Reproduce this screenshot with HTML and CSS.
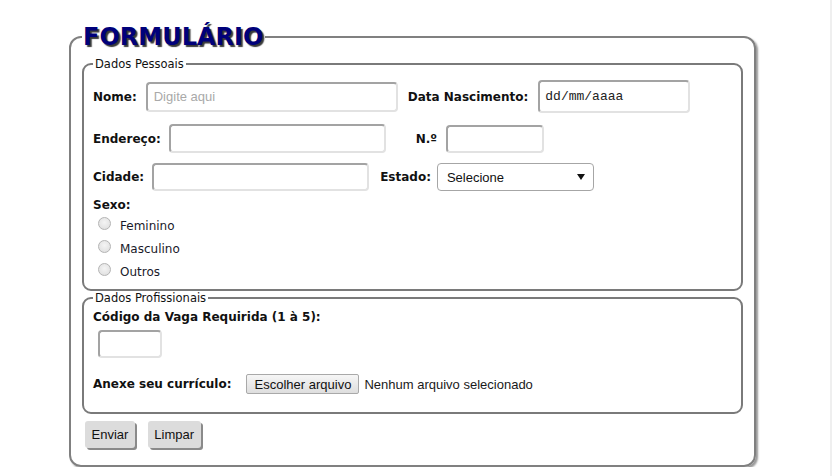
FILE: index.html
```html
<!DOCTYPE html>
<html lang="pt-BR">
<head>
<meta charset="utf-8">
<title>Formulário</title>
<link rel="stylesheet" href="styles.css">
</head>
<body>
<div class="page">
  <form class="form">
    <fieldset class="outer">
      <legend class="title">FORMULÁRIO</legend>

      <fieldset class="group personal">
        <legend class="group-title">Dados Pessoais</legend>

        <div class="row row1">
          <label class="lbl">Nome:</label>
          <input class="field f-nome" type="text" placeholder="Digite aqui">
          <label class="lbl l-data">Data Nascimento:</label>
          <input class="field f-data" type="text" value="dd/mm/aaaa">
        </div>

        <div class="row row2">
          <label class="lbl">Endereço:</label>
          <input class="field f-end" type="text">
          <label class="lbl l-num">N.º</label>
          <input class="field f-num" type="text">
        </div>

        <div class="row row3">
          <label class="lbl">Cidade:</label>
          <input class="field f-cid" type="text">
          <label class="lbl l-est">Estado:</label>
          <span class="select-wrap">
            <select class="select"><option>Selecione</option></select>
            <svg class="arrow" width="8" height="6" viewBox="0 0 8 6"><path d="M0 0H8L4 6Z" fill="#111"/></svg>
          </span>
        </div>

        <div class="lbl sexo">Sexo:</div>
        <div class="radios">
          <label class="radio-row"><input class="radio" type="radio" name="sexo"><span>Feminino</span></label>
          <label class="radio-row"><input class="radio" type="radio" name="sexo"><span>Masculino</span></label>
          <label class="radio-row"><input class="radio" type="radio" name="sexo"><span>Outros</span></label>
        </div>
      </fieldset>

      <fieldset class="group prof">
        <legend class="group-title">Dados Profissionais</legend>
        <div class="lbl codigo">Código da Vaga Requirida (1 à 5):</div>
        <input class="field f-cod" type="text">
        <div class="row file-row">
          <label class="lbl">Anexe seu currículo:</label>
          <button type="button" class="file-btn">Escolher arquivo</button>
          <span class="file-name">Nenhum arquivo selecionado</span>
        </div>
      </fieldset>

      <div class="actions">
        <button type="submit" class="btn">Enviar</button>
        <button type="reset" class="btn">Limpar</button>
      </div>
    </fieldset>
  </form>
</div>
</body>
</html>
```

FILE: styles.css
```css
html {
  background: linear-gradient(to left, #efefef 2px, #ffffff 2px);
  min-height: 100%;
}
body {
  margin: 0;
  font-family: "DejaVu Sans", Verdana, sans-serif;
  color: #111;
}
.page {
  padding-top: 23px;
}
.form {
  margin: 0;
}
.outer {
  margin: 0 0 0 69px;
  width: 687px;
  box-sizing: border-box;
  border: 2px solid #808080;
  border-radius: 12px;
  box-shadow: 2px 2px 2px #9a9a9a;
  padding: 6px 11px 17px 11px;
  min-width: 0;
}
.title {
  font-family: "DejaVu Sans", Verdana, sans-serif;
  font-weight: bold;
  font-size: 24px;
  line-height: 28px;
  color: #00007a;
  text-shadow: 2px 2px 1px #3a3a3a;
  padding: 0 2px 0 1px;
}
.group {
  margin: 0;
  border: 2px solid #7a7a7a;
  border-radius: 9px;
  padding: 9px 9px 6px 9px;
  min-width: 0;
}
.group-title {
  font-size: 11.5px;
  line-height: 14px;
  padding: 0 2px;
  color: #111;
}
.row {
  display: flex;
  align-items: center;
}
.lbl {
  font-weight: bold;
  font-size: 12px;
  line-height: 14px;
  color: #111;
  white-space: nowrap;
}
.field {
  box-sizing: border-box;
  border: 2px solid;
  border-color: #a3a3a3 #e2e2e2 #e2e2e2 #a3a3a3;
  border-radius: 4px;
  background: #fff;
  font-family: "Liberation Sans", Arial, sans-serif;
  font-size: 13px;
  padding: 0 6px;
  margin: 0;
  outline: none;
}
.field::placeholder {
  color: #a9a9a9;
}
.row1 { height: 33px; }
.f-nome { margin-left: 9px; width: 252px; height: 30px; }
.l-data { margin-left: 10px; }
.f-data {
  margin-left: 10px;
  width: 152px;
  height: 33px;
  padding: 0 5px;
  font-family: "Liberation Mono", "Courier New", monospace;
  font-size: 13px;
  color: #222;
}
.row2 { height: 29px; margin-top: 11px; }
.f-end { margin-left: 8px; width: 217px; height: 29px; }
.l-num { margin-left: 30px; }
.f-num { margin-left: 9px; width: 98px; height: 28px; }
.row3 { height: 28px; margin-top: 10px; }
.f-cid { margin-left: 8px; width: 217px; height: 28px; }
.l-est { margin-left: 11px; }
.select-wrap {
  position: relative;
  margin-left: 6px;
  display: block;
  width: 157px;
  height: 28px;
}
.select {
  appearance: none;
  -webkit-appearance: none;
  box-sizing: border-box;
  width: 157px;
  height: 28px;
  border: 1px solid #a6a6a6;
  border-radius: 4px;
  background: #fff;
  font-family: "Liberation Sans", Arial, sans-serif;
  font-size: 13px;
  color: #111;
  padding: 0 9px;
  margin: 0;
}
.arrow {
  position: absolute;
  right: 9px;
  top: 11px;
}
.sexo {
  margin-top: 7px;
}
.radios {
  display: flex;
  flex-direction: column;
  padding-top: 2px;
}
.radio-row {
  display: flex;
  align-items: center;
  height: 23px;
  font-size: 12px;
  color: #1a1a2a;
}
.radio {
  appearance: none;
  -webkit-appearance: none;
  box-sizing: border-box;
  width: 13px;
  height: 13px;
  margin: -5px 9px 0 5px;
  border: 1px solid #b4b4b4;
  border-radius: 50%;
  background: radial-gradient(circle at 50% 40%, #f4f4f4 0%, #dcdcdc 100%);
}
.prof {
  padding-top: 5px;
  padding-bottom: 18px;
}
.f-cod {
  display: block;
  margin: 6px 0 0 5px;
  width: 64px;
  height: 28px;
}
.file-row {
  margin-top: 16px;
  height: 20px;
}
.file-btn {
  margin: 0 0 0 15px;
  box-sizing: border-box;
  height: 20px;
  width: 113px;
  padding: 0;
  border: 1px solid #a9a9a9;
  border-radius: 2px;
  background: linear-gradient(#f6f6f6, #dedede);
  font-family: "Liberation Sans", Arial, sans-serif;
  font-size: 13px;
  color: #111;
}
.file-name {
  margin-left: 5px;
  font-family: "Liberation Sans", Arial, sans-serif;
  font-size: 13px;
  color: #1a1a1a;
}
.actions {
  display: flex;
  gap: 13px;
  margin: 7px 0 0 3px;
}
.btn {
  box-sizing: border-box;
  height: 27px;
  padding: 0 6.5px;
  border: none;
  border-radius: 3px;
  background: #dcdcdc;
  box-shadow: 2px 2px 0 #8a8a8a;
  font-family: "Liberation Sans", Arial, sans-serif;
  font-size: 13px;
  color: #111;
}
```
